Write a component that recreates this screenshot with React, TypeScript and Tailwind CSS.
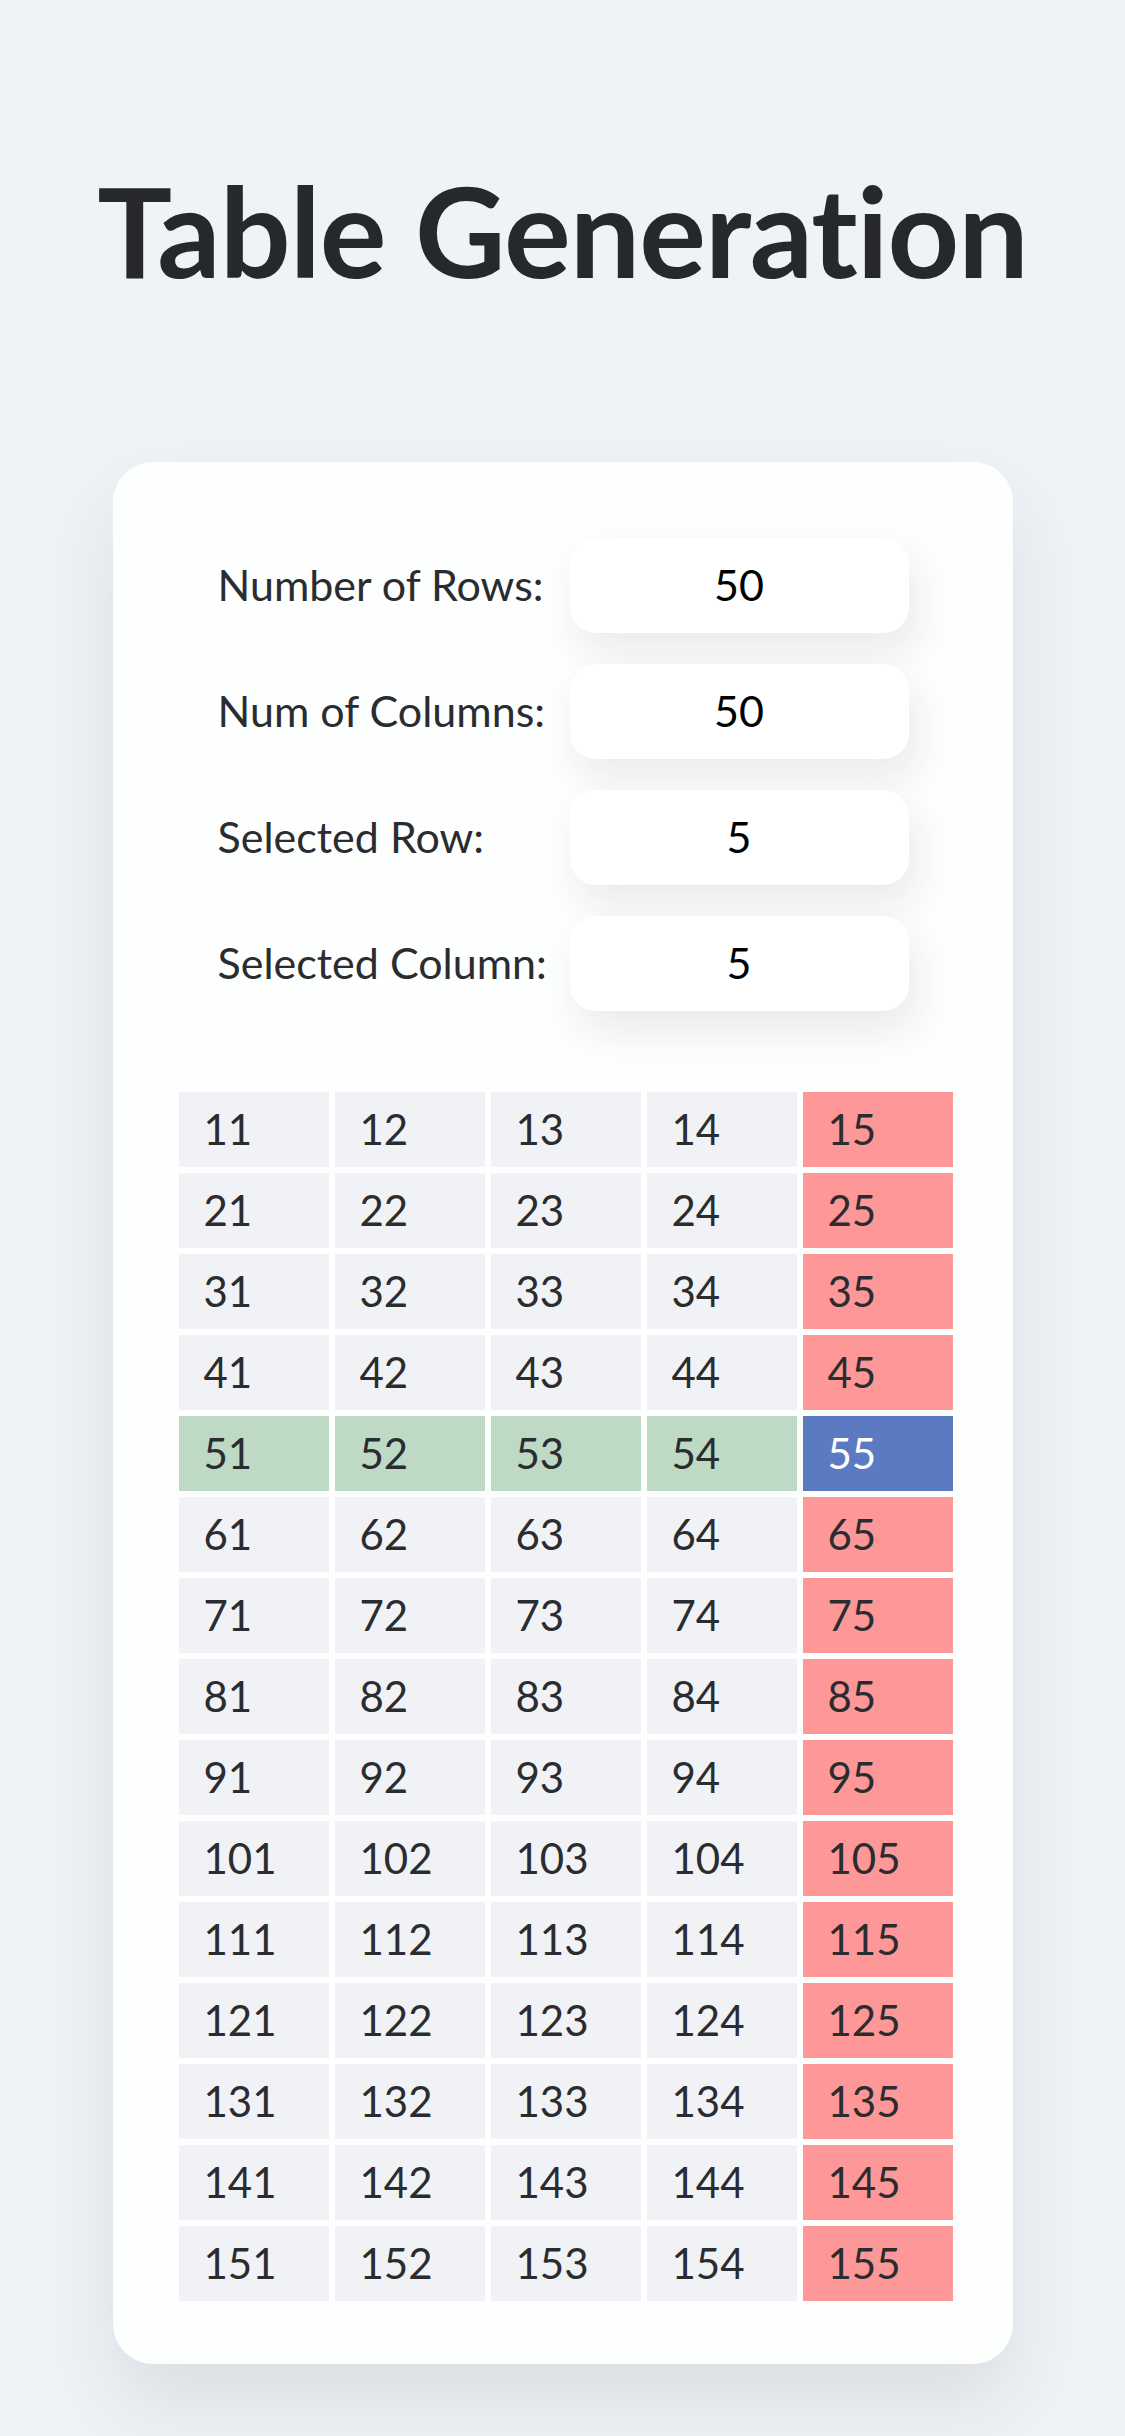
import { useState } from "react";

const font = { fontFamily: "Lato, 'Open Sans', sans-serif" };

function Field({ label, value }: { label: string; value: string }) {
  return (
    <div className="flex items-center">
      <div className="w-[352px] whitespace-nowrap text-[43px] text-[#2a2c30]">{label}</div>
      <div className="flex h-[95px] w-[339px] items-center justify-center rounded-[26px] bg-white text-[43px] text-black shadow-[8px_20px_40px_rgba(30,40,60,0.09)]">
        {value}
      </div>
    </div>
  );
}

export default function App() {
  const [rowCount] = useState(50);
  const [colCount] = useState(50);
  const [selRow] = useState(5);
  const [selCol] = useState(5);

  // only the part that fits on screen
  const rows = Array.from({ length: 15 }, (_, i) => i + 1);
  const cols = Array.from({ length: 5 }, (_, j) => j + 1);

  const cellColor = (r: number, c: number) => {
    if (r === selRow && c === selCol) return "bg-[#5c7ac2] text-white";
    if (r === selRow) return "bg-[#bed9c4] text-[#2a2c30]";
    if (c === selCol) return "bg-[#fe9797] text-[#2a2c30]";
    return "bg-[#f0f2f5] text-[#2a2c30]";
  };

  return (
    <div className="min-h-[2436px] w-full bg-[#f0f3f6] pt-[168px] pb-[72px]" style={font}>
      <h1 className="text-center text-[125px] font-bold leading-none tracking-[-1px] text-[#26282c]">
        Table Generation
      </h1>

      <div className="mx-auto mt-[169px] w-[900px] rounded-[40px] bg-[#fdfefe] px-[66px] pt-[76px] pb-[63px] shadow-[0_40px_80px_rgba(30,40,60,0.10)]">
        <div className="flex flex-col gap-[31px] pl-[39px]">
          <Field label="Number of Rows:" value={String(rowCount)} />
          <Field label="Num of Columns:" value={String(colCount)} />
          <Field label="Selected Row:" value={String(selRow)} />
          <Field label="Selected Column:" value={String(selCol)} />
        </div>

        <div className="mt-[81px] grid w-[774px] grid-cols-5 gap-[6px]">
          {rows.map((r) =>
            cols.map((c) => (
              <div
                key={`${r}-${c}`}
                className={`flex h-[75px] items-center pl-[25px] text-[42px] ${cellColor(r, c)}`}
              >
                {`${r}${c}`}
              </div>
            ))
          )}
        </div>
      </div>
    </div>
  );
}
